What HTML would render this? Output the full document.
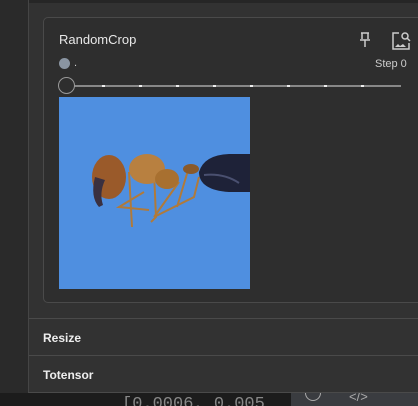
<!DOCTYPE html>
<html><head><style>
body{margin:0;width:418px;height:406px;overflow:hidden;background:#2a2a2a;font-family:"Liberation Sans",sans-serif;position:relative}
.abs{position:absolute}
</style></head><body>
<div class="abs" style="left:0;top:0;width:28px;height:393px;background:#2a2a2a"></div>
<div class="abs" style="left:28px;top:0;width:390px;height:393px;background:#323232;border-left:1px solid #454545"></div>
<div class="abs" style="left:29px;top:0;width:389px;height:3px;background:#262626"></div>
<div class="abs" style="left:43px;top:17px;width:380px;height:284px;border:1px solid #4a4a4a;border-radius:5px;background:#2e2e2e"></div>
<div class="abs" style="left:59px;top:32px;color:#e8e8e8;font-size:13px">RandomCrop</div>
<svg class="abs" style="left:358px;top:31px" width="14" height="18" viewBox="0 0 14 18"><path d="M3 2h8M4 2v6M10 2v6M2 9h10M7 9v7" stroke="#ccc" stroke-width="1.5" fill="none"/></svg>
<svg class="abs" style="left:390px;top:30px" width="22" height="22" viewBox="0 0 22 22"><path d="M9 3H3v16h16v-6" stroke="#ccc" stroke-width="1.5" fill="none"/><circle cx="15" cy="6" r="3" stroke="#ccc" stroke-width="1.5" fill="none"/><path d="M17 8l3 3" stroke="#ccc" stroke-width="1.5"/><path d="M5 17l3-3 2 2 3-2 3 3z" fill="#ccc"/></svg>
<div class="abs" style="left:59px;top:58px;width:11px;height:11px;border-radius:50%;background:#8a95a2"></div>
<div class="abs" style="left:74px;top:57px;color:#ccc;font-size:11px">.</div>
<div class="abs" style="left:375px;top:58px;color:#ccc;font-size:11px">Step 0</div>
<div class="abs" style="left:72px;top:85px;width:329px;height:2px;background:#888"></div>
<div class="abs" style="left:102px;top:85px;width:3px;height:2px;background:#eee"></div>
<div class="abs" style="left:139px;top:85px;width:3px;height:2px;background:#eee"></div>
<div class="abs" style="left:176px;top:85px;width:3px;height:2px;background:#eee"></div>
<div class="abs" style="left:213px;top:85px;width:3px;height:2px;background:#eee"></div>
<div class="abs" style="left:250px;top:85px;width:3px;height:2px;background:#eee"></div>
<div class="abs" style="left:287px;top:85px;width:3px;height:2px;background:#eee"></div>
<div class="abs" style="left:324px;top:85px;width:3px;height:2px;background:#eee"></div>
<div class="abs" style="left:361px;top:85px;width:3px;height:2px;background:#eee"></div>
<div class="abs" style="left:58px;top:77px;width:15px;height:15px;border-radius:50%;border:1.5px solid #999;background:#2e2e2e"></div>
<svg class="abs" style="left:59px;top:97px" width="191" height="192" viewBox="0 0 191 192">
<rect width="191" height="192" fill="#4f8fe0"/>
<g stroke="#b07a3a" stroke-width="2" fill="none">
<path d="M70 75l3 55M85 95l-25 15 30 3M95 75l2 45-5 5M120 85l-25 35M130 70l-12 40M140 80l-5 20-40 20"/>
</g>
<ellipse cx="50" cy="80" rx="17" ry="22" fill="#9a5a2a"/>
<path d="M36 80q-5 20 4 30l4-2q-4-12 2-25z" fill="#3a3040"/>
<ellipse cx="88" cy="72" rx="18" ry="15" fill="#b88040"/>
<ellipse cx="108" cy="82" rx="12" ry="10" fill="#a87030"/>
<ellipse cx="132" cy="72" rx="8" ry="5" fill="#8a5a2a"/>
<path d="M140 75q5-17 30-18h21v38h-21q-30 -2-30-20z" fill="#1e2238"/>
<path d="M145 78q20-2 35 8" stroke="#4a5070" stroke-width="2" fill="none"/>
</svg>
<div class="abs" style="left:29px;top:318px;width:389px;height:1px;background:#4a4a4a"></div>
<div class="abs" style="left:43px;top:331px;color:#eee;font-size:12px;font-weight:bold">Resize</div>
<div class="abs" style="left:29px;top:355px;width:389px;height:1px;background:#4a4a4a"></div>
<div class="abs" style="left:43px;top:368px;color:#eee;font-size:12px;font-weight:bold">Totensor</div>
<div class="abs" style="left:28px;top:392px;width:390px;height:1px;background:#4a4a4a"></div>
<div class="abs" style="left:0;top:393px;width:291px;height:13px;background:#1c1c1c;overflow:hidden"><div style="position:absolute;left:122px;top:2px;color:#888;font-size:17px;font-family:'Liberation Mono',monospace">[0.0006, 0.005</div></div>
<div class="abs" style="left:291px;top:393px;width:127px;height:13px;background:#3a3c40;overflow:hidden"><div style="position:absolute;left:14px;top:-8px;width:14px;height:14px;border-radius:50%;border:1.5px solid #aaa"></div><div style="position:absolute;left:58px;top:-4px;color:#aaa;font-size:13px">&lt;/&gt;</div></div>
</body></html>
